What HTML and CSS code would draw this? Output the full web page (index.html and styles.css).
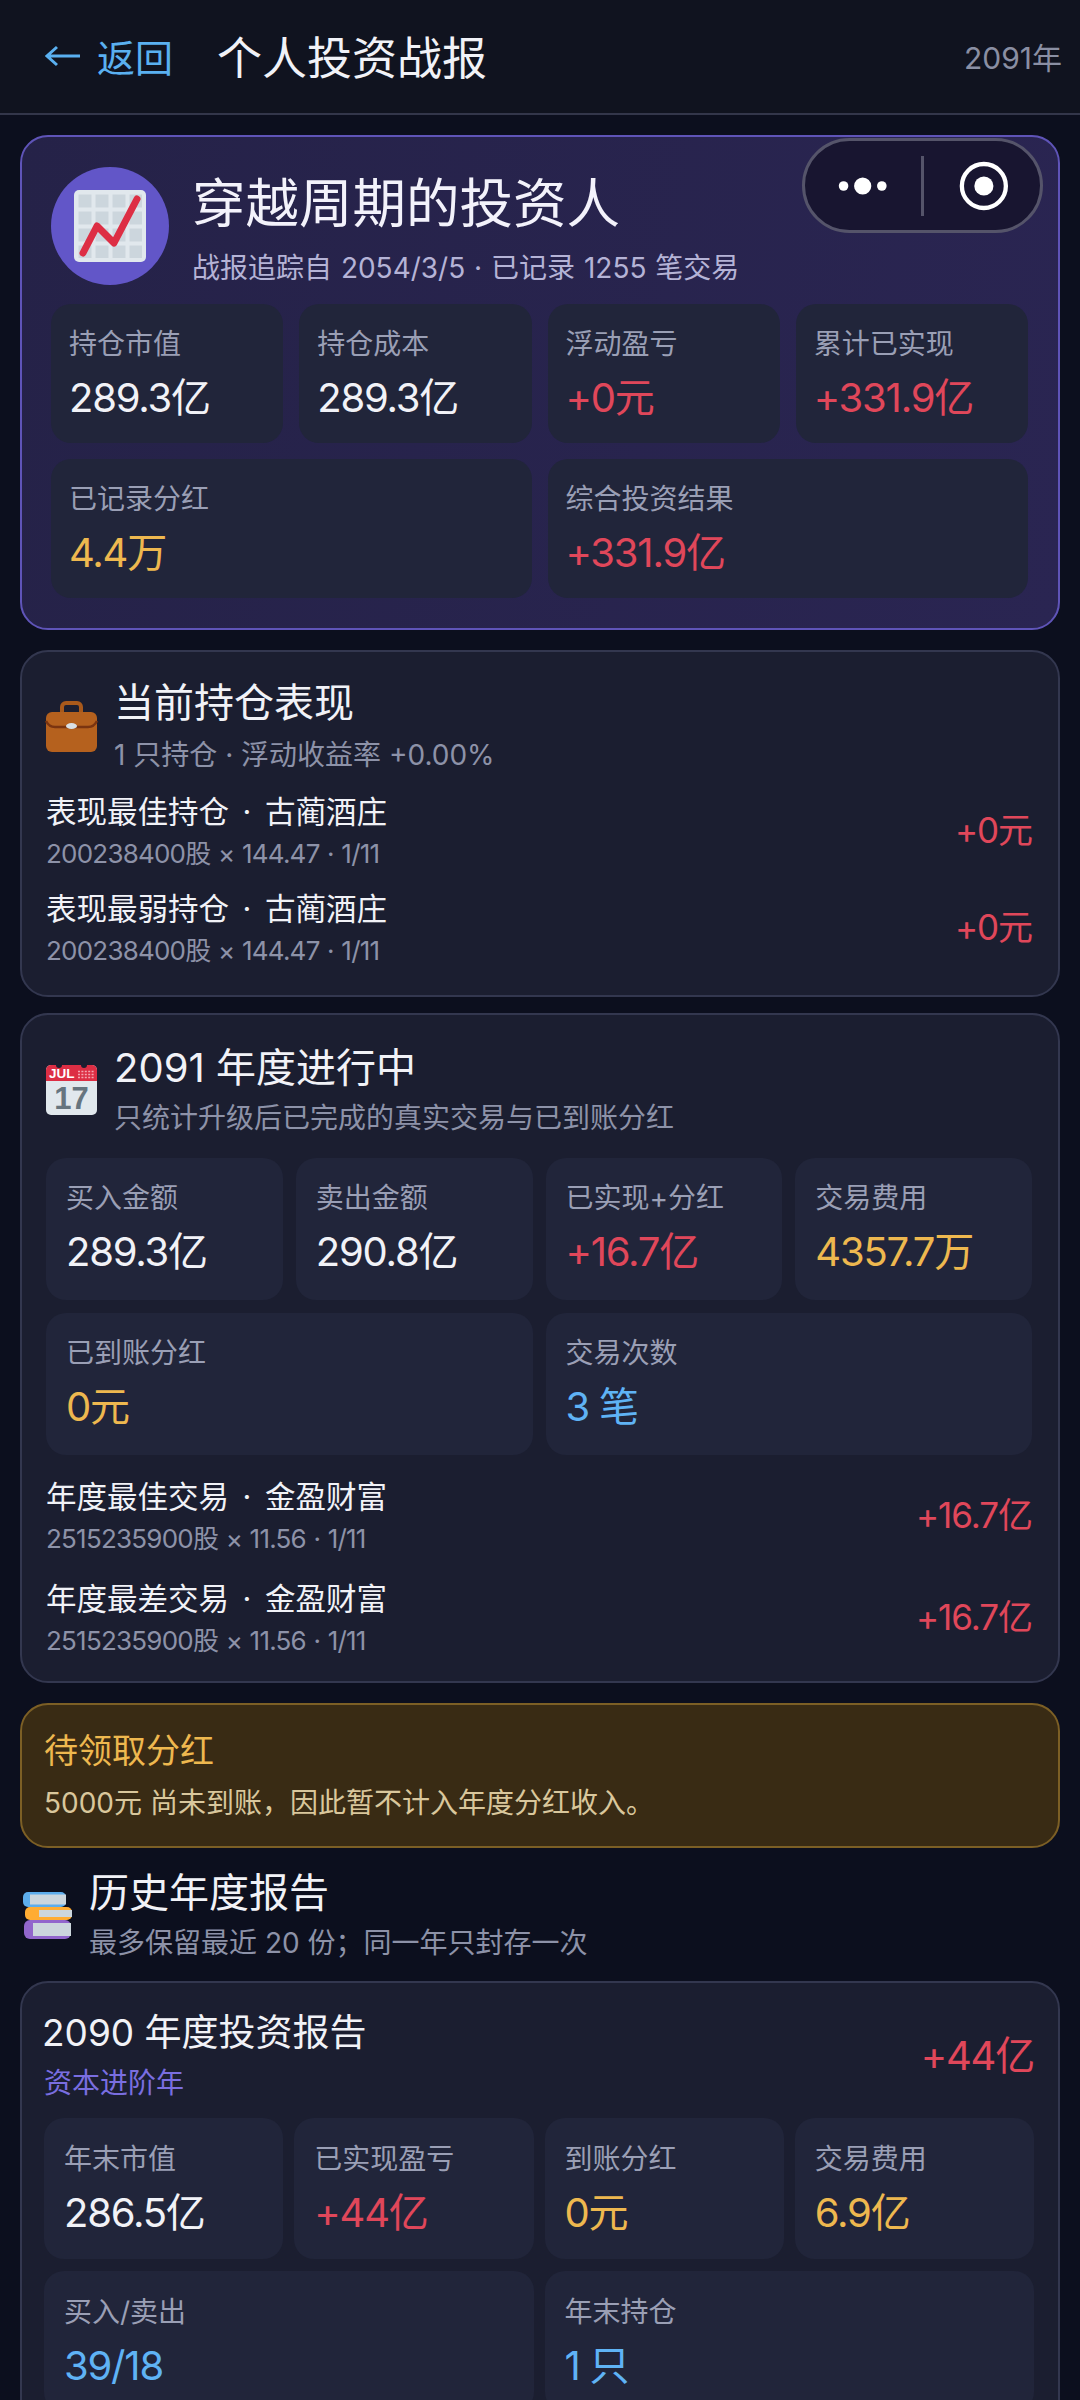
FILE: index.html
```html
<!DOCTYPE html>
<html lang="zh-CN">
<head>
  <meta charset="UTF-8">
  <meta name="viewport" content="width=device-width, initial-scale=1">
  <title>个人投资战报</title>
  <link rel="stylesheet" href="styles.css">
</head>
<body>
  <header class="topbar">
    <a class="back" href="#">
      <svg class="back-arrow" viewBox="0 0 36 24" width="36" height="24"><path d="M2 12H35M12 3L2 12L12 21" fill="none" stroke="#5ab0f0" stroke-width="3"/></svg>
      <span>返回</span>
    </a>
    <h1>个人投资战报</h1>
    <span class="year">2091年</span>
  </header>

  <main>
    <!-- 总览 -->
    <section class="card hero">
      <div class="hero-head">
        <div class="avatar">
          <svg viewBox="0 0 72 72" width="72" height="72">
            <defs>
              <pattern id="cells" x="4.5" y="4.5" width="17" height="17" patternUnits="userSpaceOnUse">
                <rect width="13" height="13" fill="#ccd6dd"/>
              </pattern>
            </defs>
            <rect width="72" height="72" rx="5" fill="#e1e8ed"/>
            <rect x="4" y="4" width="64" height="64" fill="url(#cells)"/>
            <path d="M9 63L23 36L40 53L63 9" fill="none" stroke="#dd2e44" stroke-width="7" stroke-linecap="round" stroke-linejoin="round"/>
          </svg>
        </div>
        <div>
          <h2 class="hero-title">穿越周期的投资人</h2>
          <p class="hero-sub">战报追踪自 2054/3/5 · 已记录 1255 笔交易</p>
        </div>
      </div>
      <div class="stats hero-stats">
        <div class="stat"><span class="label">持仓市值</span><span class="value">289.3亿</span></div>
        <div class="stat"><span class="label">持仓成本</span><span class="value">289.3亿</span></div>
        <div class="stat"><span class="label">浮动盈亏</span><span class="value red">+0元</span></div>
        <div class="stat"><span class="label">累计已实现</span><span class="value red">+331.9亿</span></div>
        <div class="stat wide"><span class="label">已记录分红</span><span class="value gold">4.4万</span></div>
        <div class="stat wide"><span class="label">综合投资结果</span><span class="value red">+331.9亿</span></div>
      </div>
    </section>

    <!-- 小程序胶囊 -->
    <div class="capsule">
      <svg viewBox="0 0 60 20" width="60" height="20"><circle cx="10" cy="10" r="5" fill="#fff"/><circle cx="30" cy="10" r="9" fill="#fff"/><circle cx="50" cy="10" r="5" fill="#fff"/></svg>
      <i class="capsule-line"></i>
      <svg viewBox="0 0 52 52" width="52" height="52"><circle cx="26" cy="26" r="23" fill="none" stroke="#fff" stroke-width="4.5"/><circle cx="26" cy="26" r="10" fill="#fff"/></svg>
    </div>

    <!-- 当前持仓 -->
    <section class="card holding">
      <div class="section-head">
        <svg class="icon" viewBox="0 0 51 51" width="51" height="51">
          <path d="M16 12V6a4 4 0 0 1 4-4h11a4 4 0 0 1 4 4v6" fill="none" stroke="#a8591b" stroke-width="4"/>
          <rect y="11" width="51" height="40" rx="6" fill="#b5611e"/>
          <path d="M0 20c2 4 5 6 9 6h33c4 0 7-2 9-6" fill="none" stroke="#7a3410" stroke-width="2.5"/>
          <ellipse cx="25.5" cy="25" rx="5.5" ry="3" fill="#d9e0e5"/>
        </svg>
        <div>
          <h3 class="section-title">当前持仓表现</h3>
          <p class="section-sub">1 只持仓 · 浮动收益率 +0.00%</p>
        </div>
      </div>
      <div class="rows">
        <div class="row">
          <div>
            <div class="row-title">表现最佳持仓 · 古蔺酒庄</div>
            <div class="row-sub">200238400股 × 144.47 · 1/11</div>
          </div>
          <span class="row-value red">+0元</span>
        </div>
        <div class="row">
          <div>
            <div class="row-title">表现最弱持仓 · 古蔺酒庄</div>
            <div class="row-sub">200238400股 × 144.47 · 1/11</div>
          </div>
          <span class="row-value red">+0元</span>
        </div>
      </div>
    </section>

    <!-- 本年度 -->
    <section class="card current">
      <div class="section-head">
        <svg class="icon" viewBox="0 0 51 50" width="51" height="50">
          <rect width="51" height="50" rx="5" fill="#e1e8ed"/>
          <path d="M0 16V5a5 5 0 0 1 5-5h41a5 5 0 0 1 5 5v11z" fill="#dd2e44"/>
          <circle cx="13" cy="0" r="3" fill="#1b1e30"/>
          <circle cx="38" cy="0" r="3" fill="#1b1e30"/>
          <text class="cal-month" x="3" y="13">JUL</text>
          <path d="M32 6.5h17M32 9.5h17M32 12.5h17" stroke="#f4a6b0" stroke-width="1.6" stroke-dasharray="2 1.4"/>
          <text class="cal-day" x="25.5" y="44">17</text>
        </svg>
        <div>
          <h3 class="section-title">2091 年度进行中</h3>
          <p class="section-sub">只统计升级后已完成的真实交易与已到账分红</p>
        </div>
      </div>
      <div class="stats current-stats">
        <div class="stat"><span class="label">买入金额</span><span class="value">289.3亿</span></div>
        <div class="stat"><span class="label">卖出金额</span><span class="value">290.8亿</span></div>
        <div class="stat"><span class="label">已实现+分红</span><span class="value red">+16.7亿</span></div>
        <div class="stat"><span class="label">交易费用</span><span class="value gold">4357.7万</span></div>
        <div class="stat wide"><span class="label">已到账分红</span><span class="value gold">0元</span></div>
        <div class="stat wide"><span class="label">交易次数</span><span class="value blue">3 笔</span></div>
      </div>
      <div class="rows">
        <div class="row">
          <div>
            <div class="row-title">年度最佳交易 · 金盈财富</div>
            <div class="row-sub">2515235900股 × 11.56 · 1/11</div>
          </div>
          <span class="row-value red">+16.7亿</span>
        </div>
        <div class="row">
          <div>
            <div class="row-title">年度最差交易 · 金盈财富</div>
            <div class="row-sub">2515235900股 × 11.56 · 1/11</div>
          </div>
          <span class="row-value red">+16.7亿</span>
        </div>
      </div>
    </section>

    <!-- 待领取分红 -->
    <section class="notice">
      <div class="notice-title">待领取分红</div>
      <p class="notice-text">5000元 尚未到账，因此暂不计入年度分红收入。</p>
    </section>

    <!-- 历史报告 -->
    <div class="section-head history-head">
      <svg class="icon" viewBox="0 0 49 48" width="49" height="48">
        <rect y="1" width="43" height="15" rx="5" fill="#5dadec"/>
        <rect x="7" y="3.5" width="36" height="10" fill="#ccd6dd"/>
        <rect x="2" y="16" width="47" height="13" rx="5" fill="#ffac33"/>
        <rect x="16" y="19" width="33" height="7" fill="#ccd6dd"/>
        <rect x="1" y="29" width="47" height="19" rx="6" fill="#9266cc"/>
        <rect x="10" y="32" width="38" height="13" fill="#ccd6dd"/>
      </svg>
      <div>
        <h3 class="section-title">历史年度报告</h3>
        <p class="section-sub">最多保留最近 20 份；同一年只封存一次</p>
      </div>
    </div>

    <section class="card report">
      <div class="report-head">
        <div>
          <h3 class="report-title">2090 年度投资报告</h3>
          <p class="report-tag">资本进阶年</p>
        </div>
        <span class="value red">+44亿</span>
      </div>
      <div class="stats report-stats">
        <div class="stat"><span class="label">年末市值</span><span class="value">286.5亿</span></div>
        <div class="stat"><span class="label">已实现盈亏</span><span class="value red">+44亿</span></div>
        <div class="stat"><span class="label">到账分红</span><span class="value gold">0元</span></div>
        <div class="stat"><span class="label">交易费用</span><span class="value gold">6.9亿</span></div>
        <div class="stat wide"><span class="label">买入/卖出</span><span class="value blue">39/18</span></div>
        <div class="stat wide"><span class="label">年末持仓</span><span class="value blue">1 只</span></div>
      </div>
    </section>
  </main>
</body>
</html>
```

FILE: styles.css
```css
* {
  box-sizing: border-box;
}
html, body {
  height: 2400px;
  overflow: hidden;
}
body {
  margin: 0;
  background-color: #0c0f1e;
  color: #f1f2f7;
  font-family: Inter, "Noto Sans CJK SC", "Noto Sans", sans-serif;
}
h1, h2, h3, p {
  margin: 0;
  font-weight: 400;
}

/* 顶栏 */
.topbar {
  display: flex;
  align-items: center;
  height: 115px;
  padding: 0 18px 2px 45px;
  background-color: #10131f;
  border-bottom: 2px solid #33364a;
}
.back {
  display: flex;
  align-items: center;
  gap: 16px;
  color: #5ab0f0;
  font-size: 38px;
  text-decoration: none;
}
.topbar h1 {
  margin-left: 44px;
  font-size: 45px;
}
.year {
  margin-left: auto;
  color: #8a8fa3;
  font-size: 30px;
}

main {
  position: relative;
  padding: 20px 20px 0;
}

/* 卡片 */
.card {
  background-color: #1b1e30;
  border: 2px solid #33374f;
  border-radius: 28px;
}
.hero {
  height: 495px;
  margin-bottom: 20px;
  padding: 30px 30px 0 29px;
  background: linear-gradient(100deg, #252248, #2a2552);
  border-color: #5f54b8;
}
.hero-head {
  display: flex;
  gap: 23px;
}
.avatar {
  display: flex;
  align-items: center;
  justify-content: center;
  flex: none;
  width: 118px;
  height: 118px;
  border-radius: 50%;
  background-color: #6256c8;
}
.hero-title {
  margin-top: 5px;
  font-size: 53.5px;
  line-height: 64px;
  color: #f3f2fb;
}
.hero-sub {
  margin-top: 12px;
  font-size: 28px;
  line-height: 40px;
  word-spacing: 1px;
  color: #b5b3d6;
}

/* 统计格 */
.stats {
  display: grid;
  grid-template-columns: repeat(4, 1fr);
}
.stat {
  display: flex;
  flex-direction: column;
  padding: 20px 20px 0;
  background-color: #21253a;
  border-radius: 20px;
}
.stat.wide {
  grid-column: span 2;
}
.label {
  font-size: 28px;
  line-height: 40px;
  color: #9a9fb5;
}
.value {
  margin-top: 9px;
  font-size: 40px;
  line-height: 50px;
  letter-spacing: -0.03em;
}
.red { color: #e0475a; }
.gold { color: #eeb84f; }
.blue { color: #5fb3f5; }

.hero-stats {
  grid-auto-rows: 139px;
  gap: 16px;
  margin-top: 16px;
}
.hero-stats .stat {
  padding: 20px 18px 0;
}
.current-stats {
  grid-auto-rows: 142px;
  gap: 13px;
  margin: 20px 0;
}
.report-stats {
  grid-auto-rows: 141px;
  gap: 12px 11px;
  margin-top: 15px;
}
.report-stats .stat {
  padding-top: 21px;
}

/* 胶囊 */
.capsule {
  position: absolute;
  top: 23px;
  right: 37px;
  display: flex;
  align-items: center;
  width: 241px;
  height: 95px;
  padding: 0 31px 0 29px;
  background-color: #181530;
  border: 3px solid #55546a;
  border-radius: 48px;
}
.capsule-line {
  width: 3px;
  height: 60px;
  margin: 0 35px 0 30px;
  background-color: #55546a;
}

/* 区块标题 */
.section-head {
  display: flex;
  align-items: center;
  gap: 17px;
}
.icon {
  flex: none;
  overflow: visible;
}
.section-title {
  font-size: 40px;
  line-height: 52px;
}
.section-sub {
  margin-top: 4px;
  font-size: 28px;
  line-height: 40px;
  color: #8d92a8;
}
.cal-month {
  fill: #fff;
  font-size: 13.5px;
  font-weight: 700;
  font-family: "Liberation Sans", sans-serif;
}
.cal-day {
  fill: #66757f;
  font-size: 31px;
  font-weight: 700;
  text-anchor: middle;
  font-family: "Liberation Sans", sans-serif;
}

.holding {
  height: 347px;
  margin-bottom: 16px;
  padding: 25px 26px 0 24px;
}
.holding .section-sub {
  margin-top: 6px;
}
.holding .rows {
  gap: 15px;
  margin-top: 15px;
}
.current {
  height: 670px;
  margin-bottom: 20px;
  padding: 27px 26px 0 24px;
}

/* 明细行 */
.rows {
  display: flex;
  flex-direction: column;
  gap: 20px;
}
.row {
  display: flex;
  align-items: center;
  justify-content: space-between;
}
.row-title {
  font-size: 30.5px;
  line-height: 44px;
  word-spacing: 5px;
}
.row-sub {
  margin-top: 2px;
  font-size: 26px;
  line-height: 36px;
  letter-spacing: -0.03em;
  word-spacing: 1px;
  color: #8d92a8;
}
.row-value {
  margin-bottom: 8px;
  font-size: 35px;
  letter-spacing: -0.03em;
}

/* 待领取 */
.notice {
  height: 145px;
  padding: 24px 22px 0;
  background-color: #392b14;
  border: 2px solid #7c5f25;
  border-radius: 28px;
}
.notice-title {
  font-size: 34px;
  line-height: 44px;
  color: #eeb84f;
}
.notice-text {
  margin-top: 10px;
  font-size: 28px;
  line-height: 40px;
  color: #d9c79c;
}

.history-head {
  margin: 19px 0 18px 3px;
}

/* 历史报告 */
.report {
  height: 600px;
  padding: 26px 24px 0 22px;
}
.report-head {
  display: flex;
  align-items: center;
  justify-content: space-between;
}
.report-head .value {
  margin-top: 0;
}
.report-title {
  margin-left: -2px;
  font-size: 37px;
  line-height: 48px;
}
.report-tag {
  margin-top: 6px;
  font-size: 28px;
  line-height: 40px;
  color: #7a6ee0;
}
```
